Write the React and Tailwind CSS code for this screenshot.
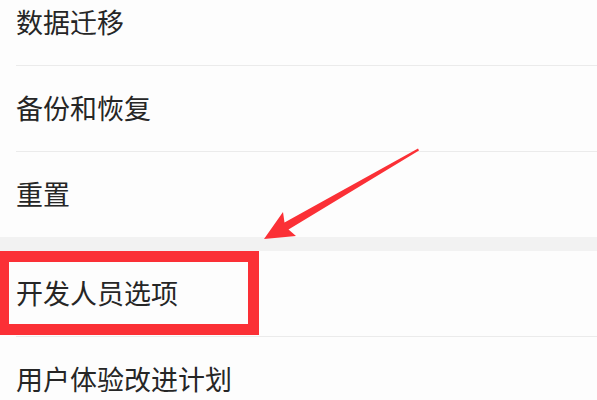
const rows = ["数据迁移", "备份和恢复", "重置"];

function Row({ label }) {
  return (
    <div className="h-[85px] flex items-center pl-4 text-[27px] text-[#262626]">
      {label}
    </div>
  );
}

function Divider() {
  return <div className="ml-4 h-px bg-[#ebebeb]" />;
}

export default function App() {
  return (
    <div
      className="relative w-[597px] h-[400px] overflow-hidden bg-[#fdfdfd]"
      style={{ fontFamily: '"Noto Sans CJK SC", "Noto Sans", sans-serif' }}
    >
      <div className="-mt-[20px]">
        {rows.map((r, i) => (
          <div key={r}>
            <Row label={r} />
            {i < rows.length - 1 && <Divider />}
          </div>
        ))}

        <div className="h-[14px] bg-[#f2f2f2]" />

        <Row label="开发人员选项" />
        <Divider />
        <Row label="用户体验改进计划" />
      </div>

      {/* highlight box */}
      <div className="absolute left-[-2px] top-[251px] w-[261px] h-[84px] border-[11px] border-[#fb3036]" />

      {/* arrow */}
      <svg className="absolute left-0 top-0" width="597" height="400" viewBox="0 0 597 400">
        <polygon
          points="264,239 283,212 284.5,222.5 418,148.5 419,150.5 288.5,229.5 296,236"
          fill="#fb3036"
        />
      </svg>
    </div>
  );
}
